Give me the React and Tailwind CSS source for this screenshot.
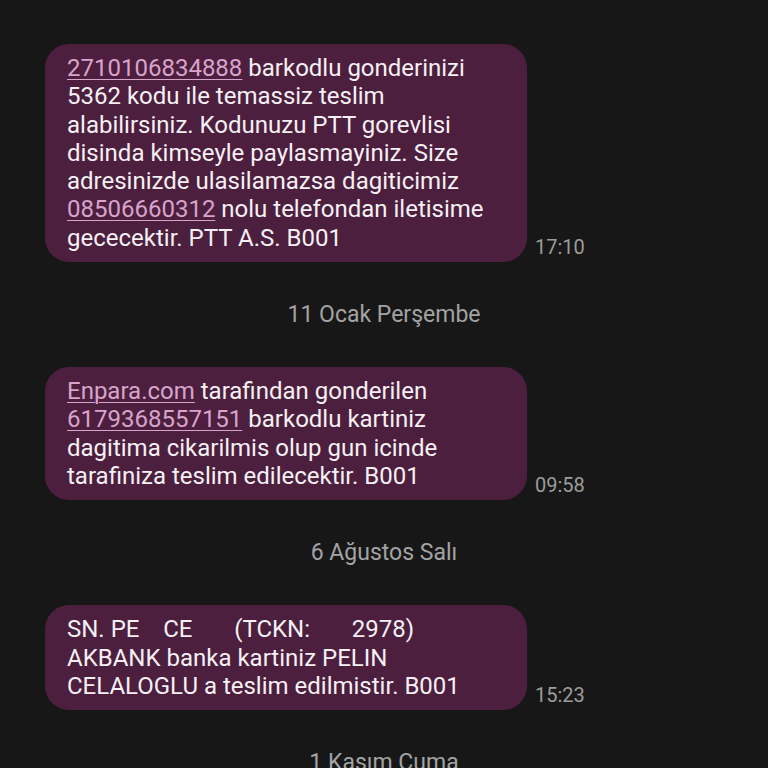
const messages = [
  {
    time: '17:10',
    parts: [
      { link: '2710106834888' },
      ' barkodlu gonderinizi 5362 kodu ile temassiz teslim alabilirsiniz. Kodunuzu PTT gorevlisi disinda kimseyle paylasmayiniz. Size adresinizde ulasilamazsa dagiticimiz ',
      { link: '08506660312' },
      ' nolu telefondan iletisime gececektir. PTT A.S. B001',
    ],
  },
  { date: '11 Ocak Perşembe' },
  {
    time: '09:58',
    parts: [
      { link: 'Enpara.com' },
      ' tarafindan gonderilen ',
      { link: '6179368557151' },
      ' barkodlu kartiniz dagitima cikarilmis olup gun icinde tarafiniza teslim edilecektir. B001',
    ],
  },
  { date: '6 Ağustos Salı' },
  {
    time: '15:23',
    parts: ['SN. PE    CE       (TCKN:       2978)\nAKBANK banka kartiniz PELIN CELALOGLU a teslim edilmistir. B001'],
  },
  { date: '1 Kasım Cuma' },
];

function Bubble({ parts, time }) {
  return (
    <div className="flex items-end">
      <div className="ml-[45px] w-[482px] rounded-[24px] bg-[#4b1f3d] pl-[22px] pr-[24px] py-[10px] text-[24px] leading-[28.3px] text-[#f6f0f4] whitespace-pre-wrap">
        {parts.map((p, i) =>
          typeof p === 'string' ? (
            <span key={i}>{p}</span>
          ) : (
            <span key={i} className="text-[#d9a3cc] underline underline-offset-[3px] decoration-1">
              {p.link}
            </span>
          )
        )}
      </div>
      <span className="ml-[8px] mb-[3px] text-[20px] leading-[24px] text-[#9c9c9c]">{time}</span>
    </div>
  );
}

export default function App() {
  return (
    <div
      className="h-[768px] w-[768px] overflow-hidden bg-[#171717] pt-[44px]"
      style={{ fontFamily: 'Roboto, "Noto Sans", sans-serif' }}
    >
      <div className="flex flex-col">
        {messages.map((m, i) =>
          m.date ? (
            <div key={i} className="py-[39.5px] text-center text-[23px] leading-[26px] text-[#a3a3a3]">
              {m.date}
            </div>
          ) : (
            <Bubble key={i} parts={m.parts} time={m.time} />
          )
        )}
      </div>
    </div>
  );
}
